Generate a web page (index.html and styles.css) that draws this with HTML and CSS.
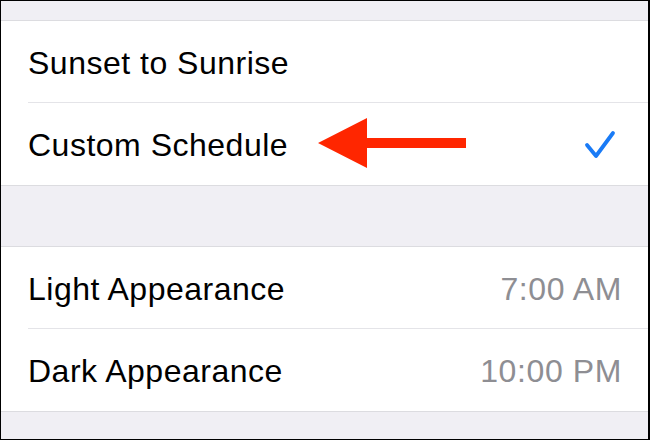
FILE: index.html
```html
<!DOCTYPE html>
<html>
<head>
<meta charset="utf-8">
<link rel="stylesheet" href="styles.css">
</head>
<body>
<div class="screen">
  <div class="group first">
    <div class="row"><span class="label">Sunset to Sunrise</span></div>
    <div class="row">
      <span class="label">Custom Schedule</span>
      <svg class="check" width="40" height="30" viewBox="0 0 40 30"><polyline points="5,16 14,27 31,4" fill="none" stroke="#1a7bf6" stroke-width="3.8" stroke-linecap="round" stroke-linejoin="round"/></svg>
    </div>
  </div>
  <div class="group second">
    <div class="row"><span class="label">Light Appearance</span><span class="value">7:00 AM</span></div>
    <div class="row"><span class="label">Dark Appearance</span><span class="value">10:00 PM</span></div>
  </div>
  <svg class="arrow" width="152" height="54" viewBox="0 0 152 54"><polygon points="2,27 51,2 51,22 150,22 150,32 51,32 51,52" fill="#ff2600"/></svg>
</div>
</body>
</html>
```
FILE: styles.css
```css
html, body {
  margin: 0;
  padding: 0;
}
body {
  width: 650px;
  height: 440px;
  overflow: hidden;
}
.screen {
  position: relative;
  box-sizing: border-box;
  width: 650px;
  height: 440px;
  background: #f0eff4;
  border: 1px solid #000;
  border-right-width: 2px;
  padding-top: 19px;
  font-family: "Liberation Sans", Arial, sans-serif;
  display: flex;
  flex-direction: column;
  gap: 60px;
}
.group {
  background: #fff;
  border-top: 1px solid #dcdce0;
  border-bottom: 1px solid #dcdce0;
  padding-left: 27px;
}
.row {
  height: 81px;
  display: flex;
  align-items: center;
  justify-content: space-between;
  padding-right: 26px;
  padding-top: 3px;
  box-sizing: border-box;
}
.row + .row {
  border-top: 1px solid #e4e4e8;
  height: 83px;
}
.label {
  font-size: 32px;
  color: #000;
  letter-spacing: 0.5px;
}
.value {
  font-size: 32px;
  color: #8e8e93;
  letter-spacing: 0.6px;
}
.check {
  display: block;
  margin-top: -3px;
}
.arrow {
  position: absolute;
  left: 315px;
  top: 115px;
}
```
